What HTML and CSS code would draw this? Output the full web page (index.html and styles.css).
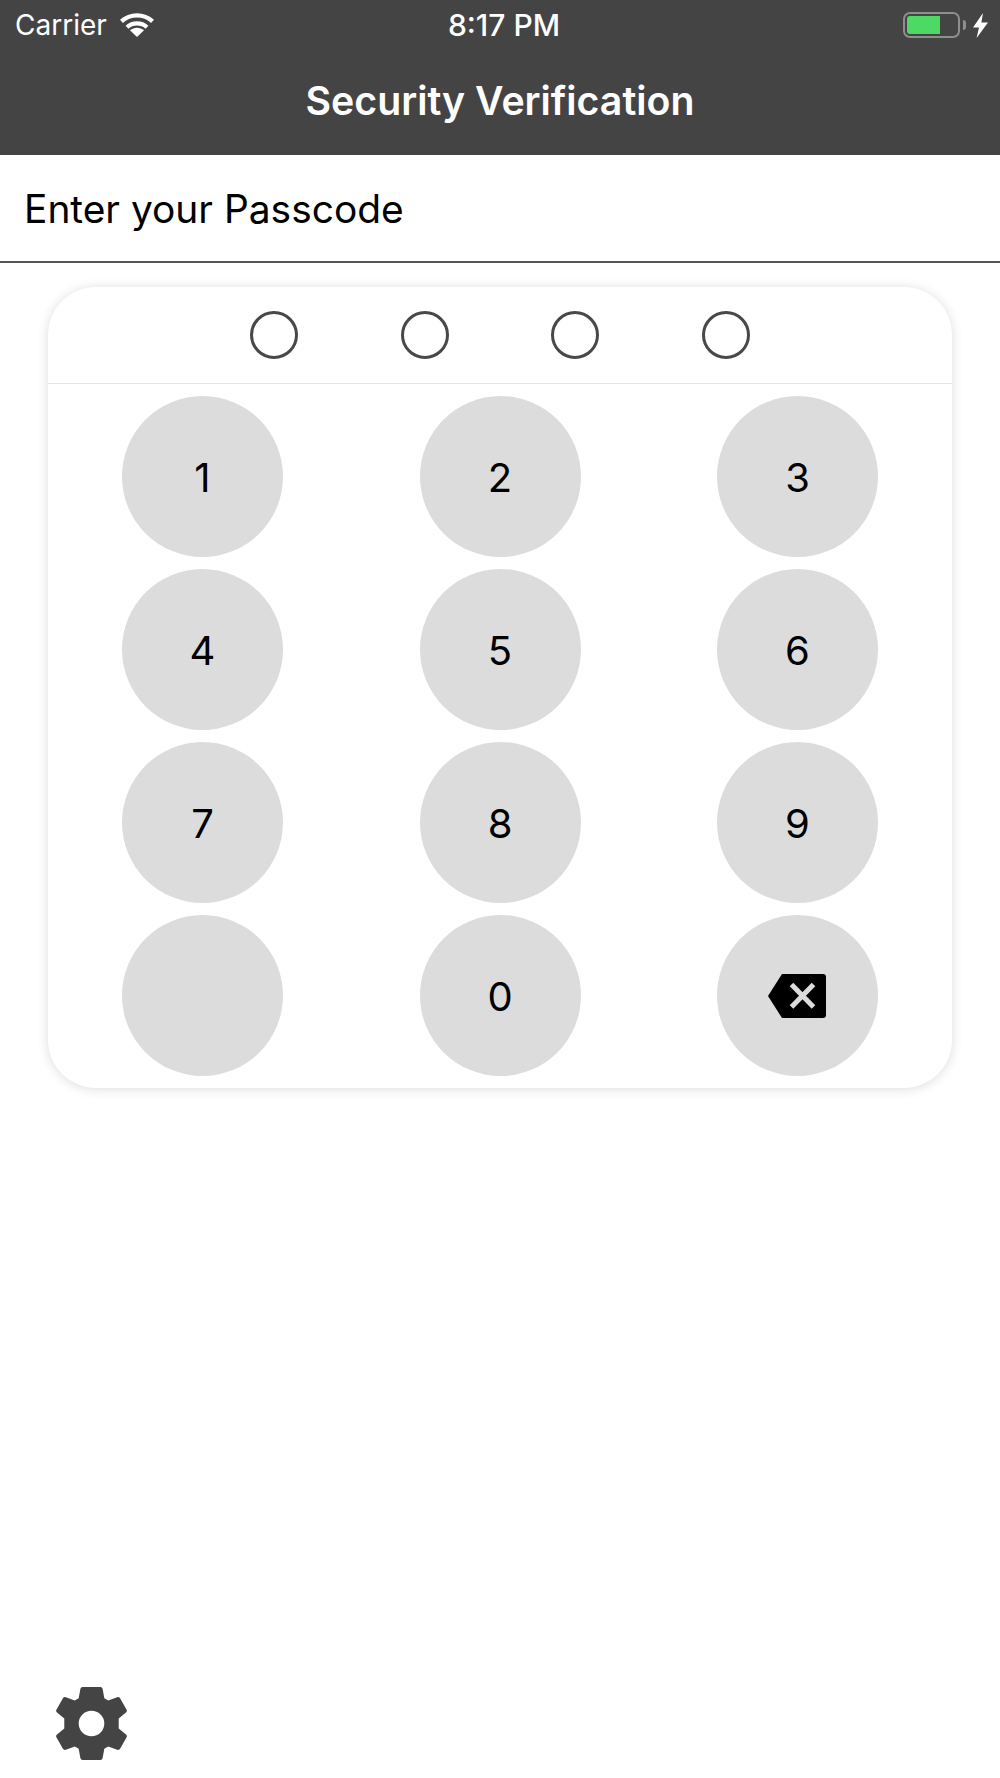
FILE: index.html
```html
<!DOCTYPE html>
<html lang="en">
<head>
    <meta charset="UTF-8">
    <meta name="viewport" content="width=device-width, initial-scale=1.0">
    <title>Security Verification</title>
    <link rel="stylesheet" href="styles.css">
</head>
<body>
<div class="header">
    <div class="status-bar">
        <div class="status-left">
            <span>Carrier</span>
            <svg class="wifi" width="34" height="24" viewBox="0 0 34 24">
                <path d="M17 24 L10 17.2 C14 13.8 20 13.8 24 17.2 Z" fill="#fff"/>
                <path d="M7 14.2 C12.6 9.2 21.4 9.2 27 14.2" fill="none" stroke="#fff" stroke-width="4.2"/>
                <path d="M1.5 8.4 C10.2 0.4 23.8 0.4 32.5 8.4" fill="none" stroke="#fff" stroke-width="4.4"/>
            </svg>
        </div>
        <div class="status-time">8:17 PM</div>
        <div class="status-right">
            <div class="battery"><div class="battery-fill"></div></div>
            <div class="battery-nub"></div>
            <svg class="bolt" width="15" height="25" viewBox="0 0 15 25">
                <path d="M10 0 L0 14.5 H6 L3.6 25 L15 9.5 H8.4 Z" fill="#fff"/>
            </svg>
        </div>
    </div>
    <h1>Security Verification</h1>
</div>

<div class="prompt">Enter your Passcode</div>

<div class="pin-card">
    <div class="dots">
        <span class="dot"></span>
        <span class="dot"></span>
        <span class="dot"></span>
        <span class="dot"></span>
    </div>
    <div class="keypad">
        <button class="key">1</button>
        <button class="key">2</button>
        <button class="key">3</button>
        <button class="key">4</button>
        <button class="key">5</button>
        <button class="key">6</button>
        <button class="key">7</button>
        <button class="key">8</button>
        <button class="key">9</button>
        <button class="key"></button>
        <button class="key">0</button>
        <button class="key">
            <svg class="backspace" width="58" height="44" viewBox="0 0 58 44">
                <path d="M14 0 H55 Q58 0 58 3 V41 Q58 44 55 44 H14 L0 22 Z" fill="#000"/>
                <path d="M23.5 10.5 L45.5 33 M45.5 10.5 L23.5 33" stroke="#dcdcdc" stroke-width="5" fill="none"/>
            </svg>
        </button>
    </div>
</div>

<div class="footer">
    <svg class="gear" width="71" height="73" viewBox="0 0 72 74">
        <path fill-rule="evenodd" fill="#444" d="M27 0 H45 Q47 0 47.3 2 L49 11.5 L53 13.8 L62 10.4 Q64 9.8 65 11.4 L71.6 23 Q72.4 24.6 71 25.8 L63.6 32 V42 L71 48.2 Q72.4 49.4 71.6 51 L65 62.6 Q64 64.2 62 63.6 L53 60.2 L49 62.5 L47.3 72 Q47 74 45 74 H27 Q25 74 24.7 72 L23 62.5 L19 60.2 L10 63.6 Q8 64.2 7 62.6 L0.4 51 Q-0.4 49.4 1 48.2 L8.4 42 V32 L1 25.8 Q-0.4 24.6 0.4 23 L7 11.4 Q8 9.8 10 10.4 L19 13.8 L23 11.5 L24.7 2 Q25 0 27 0 Z M36 24 A13 13 0 1 0 36 50 A13 13 0 1 0 36 24 Z"/>
    </svg>
</div>
</body>
</html>
```
FILE: styles.css
```css
body {
    margin: 0;
    height: 1778px;
    display: flex;
    flex-direction: column;
    font-family: Inter, "Liberation Sans", sans-serif;
    background-color: white;
    color: black;
}

.header {
    height: 155px;
    background-color: #444;
    color: white;
}

.status-bar {
    height: 50px;
    display: grid;
    grid-template-columns: 1fr auto 1fr;
    align-items: center;
    padding: 0 12px 0 15px;
    font-size: 28px;
}

.status-left {
    display: flex;
    align-items: center;
    gap: 13px;
}

.status-time {
    font-size: 30px;
    font-weight: 500;
    margin-left: 5px;
}

.status-right {
    display: flex;
    align-items: center;
    justify-content: flex-end;
}

.battery {
    width: 57px;
    height: 26px;
    box-sizing: border-box;
    border: 2px solid #8e8e8e;
    border-radius: 7px;
    padding: 2px;
}

.battery-fill {
    width: 33px;
    height: 18px;
    background-color: #4cd964;
    border-radius: 3px 0 0 3px;
}

.battery-nub {
    width: 3px;
    height: 10px;
    margin: 0 7px 0 3px;
    background-color: #8e8e8e;
    border-radius: 0 3px 3px 0;
}

.header h1 {
    margin: 0;
    height: 105px;
    line-height: 102px;
    text-align: center;
    font-size: 39.25px;
    font-weight: 600;
}

.prompt {
    height: 106px;
    line-height: 108px;
    padding-left: 24px;
    font-size: 38.9px;
    border-bottom: 2px solid #555;
}

.pin-card {
    margin: 24px 48px 0;
    background-color: white;
    border-radius: 48px;
    box-shadow: 0 1px 12px rgba(0, 0, 0, 0.14);
}

.dots {
    height: 96px;
    display: flex;
    align-items: center;
    justify-content: center;
    gap: 102.8px;
    border-bottom: 1px solid #e3e3e3;
}

.dot {
    width: 48px;
    height: 48px;
    box-sizing: border-box;
    border: 3px solid #484848;
    border-radius: 50%;
}

.keypad {
    display: grid;
    grid-template-columns: repeat(3, 161px);
    justify-content: space-between;
    row-gap: 12px;
    padding: 12px 74px;
}

.key {
    width: 161px;
    height: 161px;
    padding: 2px 0 0;
    border: none;
    border-radius: 50%;
    background-color: #dcdcdc;
    color: black;
    font-family: inherit;
    font-size: 40px;
    display: flex;
    align-items: center;
    justify-content: center;
}

.backspace {
    margin: -2px 2px 0 0;
}

.footer {
    margin-top: auto;
    padding: 0 0 18px 56px;
}

.gear {
    display: block;
}
```
